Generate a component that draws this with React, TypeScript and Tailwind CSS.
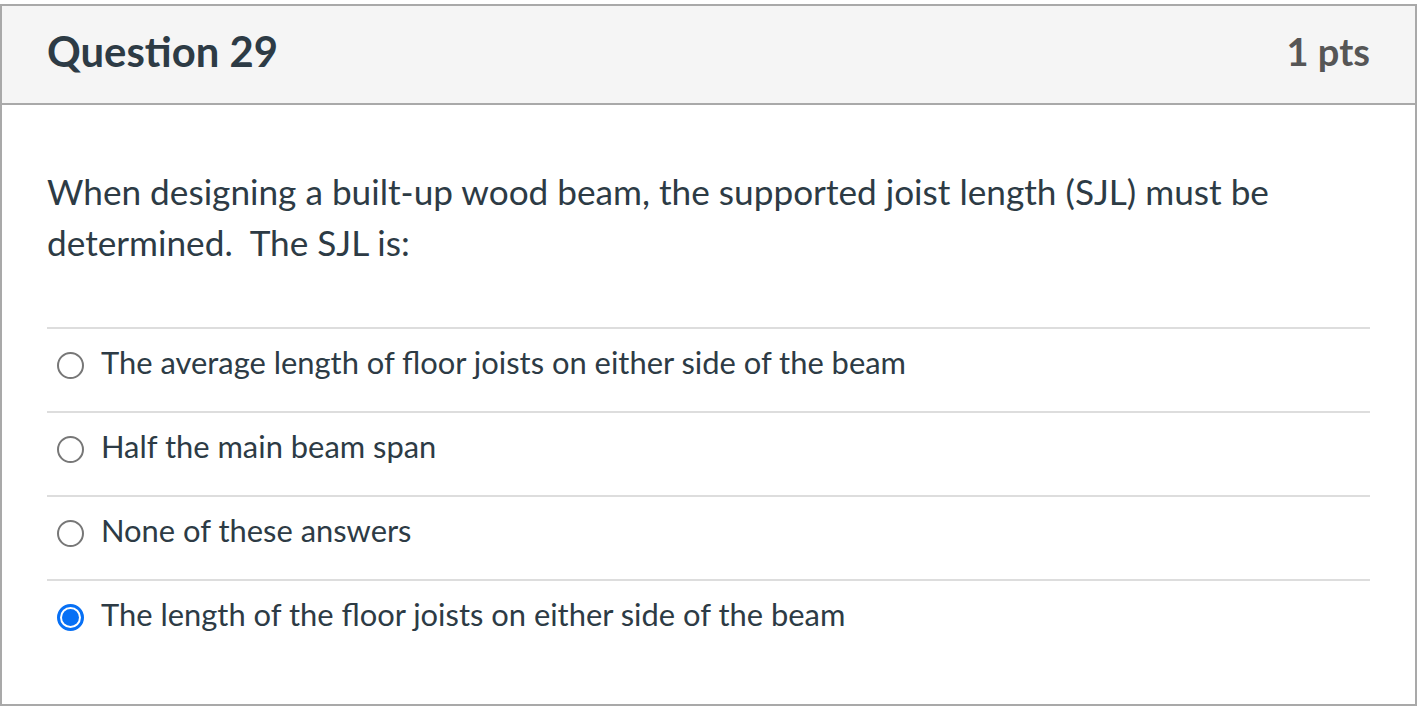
const options = [
  { label: "The average length of floor joists on either side of the beam", checked: false },
  { label: "Half the main beam span", checked: false },
  { label: "None of these answers", checked: false },
  { label: "The length of the floor joists on either side of the beam", checked: true },
];

function Radio({ checked }: { checked: boolean }) {
  if (checked) {
    return (
      <span className="mt-[12px] flex h-[27px] w-[27px] shrink-0 items-center justify-center rounded-full border-[3px] border-[#0770f5] bg-white">
        <span className="h-[17px] w-[17px] rounded-full bg-[#0770f5]" />
      </span>
    );
  }
  return (
    <span className="mt-[12px] block h-[27px] w-[27px] shrink-0 rounded-full border-2 border-[#777777] bg-white" />
  );
}

export default function App() {
  return (
    <div className="min-h-screen bg-white pt-[4px] font-['Lato','Liberation_Sans',sans-serif]">
      <div className="w-[1417px] border-2 border-[#a9a9a9] bg-white">
        {/* header */}
        <div className="flex h-[99px] items-center justify-between border-b-2 border-[#a9a9a9] bg-[#f5f5f5] px-[45px] pb-[6px]">
          <h2 className="text-[41.8px] font-bold leading-[1.2] text-[#2d3b45]">Question 29</h2>
          <div className="text-[38px] font-bold leading-[1.2] text-[#565656]">1 pts</div>
        </div>

        {/* body */}
        <div className="px-[45px] pb-[41px] pt-[61px] text-[#2d3b45]">
          <p className="text-[35.2px] leading-[51px]">
            When designing a built-up wood beam, the supported joist length (SJL) must be determined.&nbsp; The SJL is:
          </p>

          <div className="mt-[59px] w-[1323px]">
            {options.map((opt, i) => (
              <label
                key={i}
                className="flex h-[84px] items-start gap-[17px] border-t-2 border-[#dddddd] pl-[10px] pt-[11px]"
              >
                <Radio checked={opt.checked} />
                <span className="text-[30.9px] leading-[45px]">{opt.label}</span>
              </label>
            ))}
          </div>
        </div>
      </div>
    </div>
  );
}
